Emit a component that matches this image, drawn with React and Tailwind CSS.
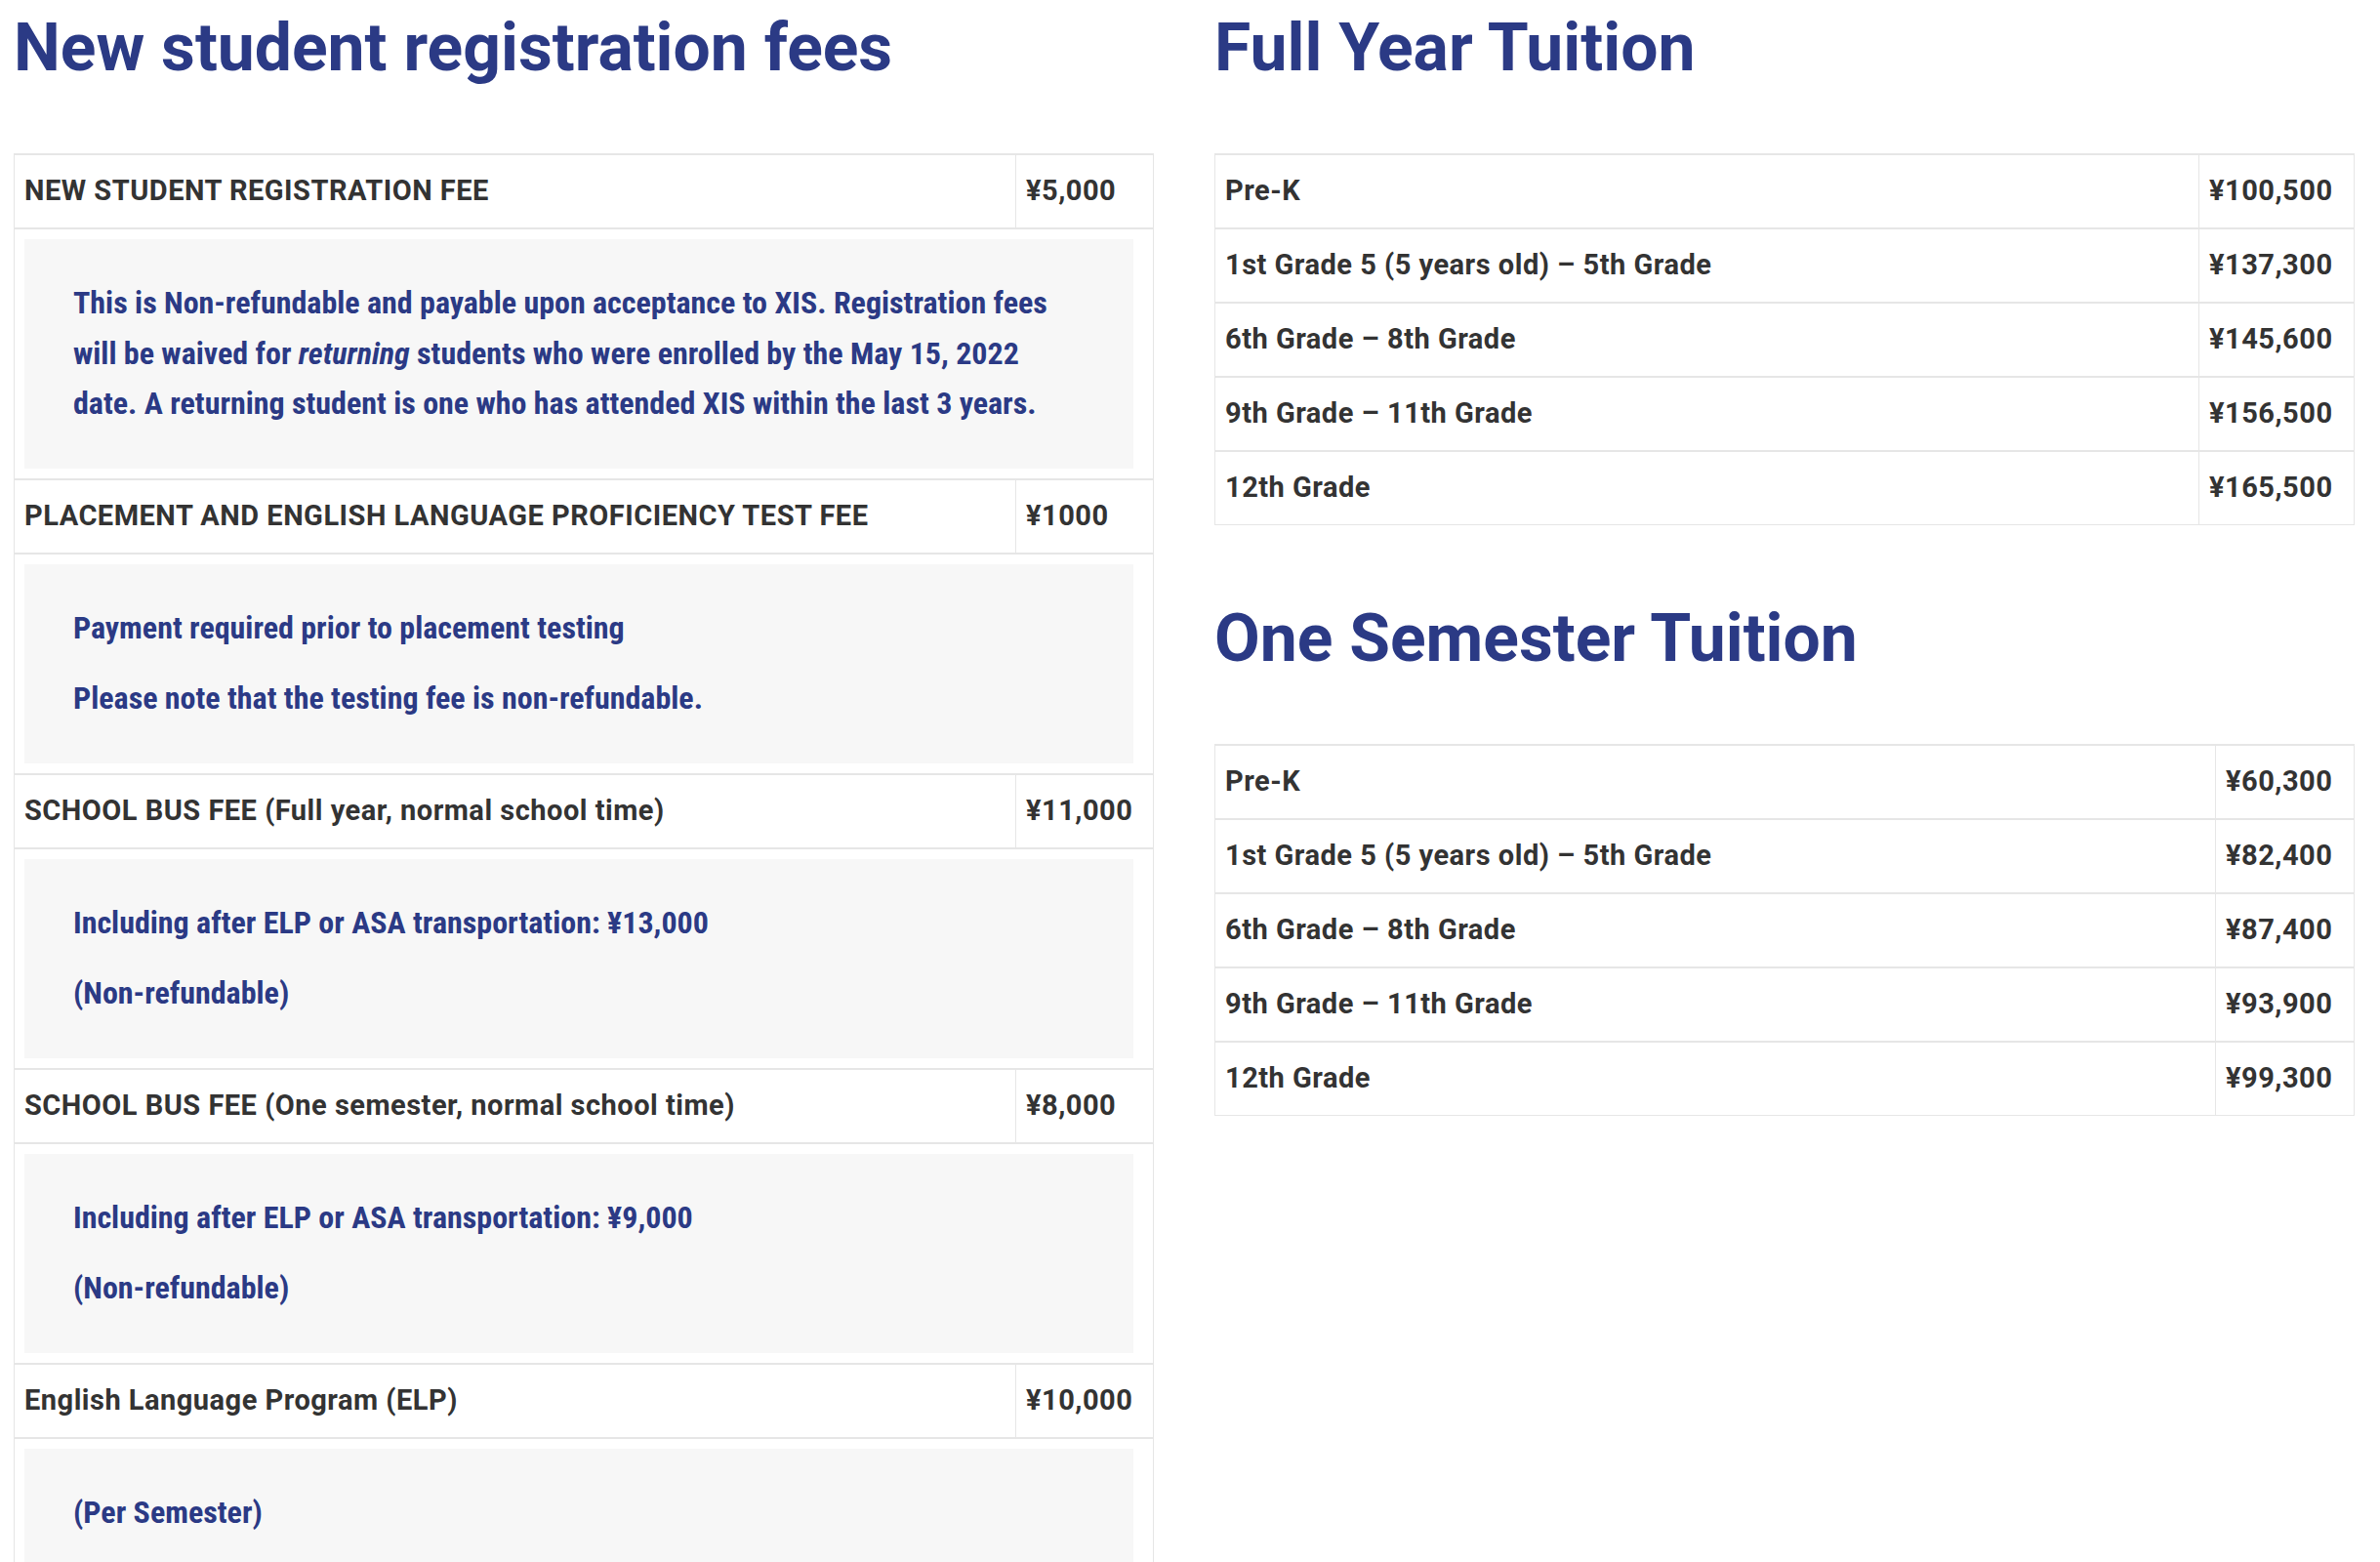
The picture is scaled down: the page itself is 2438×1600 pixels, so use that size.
import React from "react";

const fees = [
  {
    label: "NEW STUDENT REGISTRATION FEE",
    price: "¥5,000",
    notes: [
      <>
        This is Non-refundable and payable upon acceptance to XIS. Registration fees
        <br />
        will be waived for <em>returning</em> students who were enrolled by the May 15, 2022
        <br />
        date. A returning student is one who has attended XIS within the last 3 years.
      </>,
    ],
  },
  {
    label: "PLACEMENT AND ENGLISH LANGUAGE PROFICIENCY TEST FEE",
    price: "¥1000",
    notes: ["Payment required prior to placement testing", "Please note that the testing fee is non-refundable."],
  },
  {
    label: "SCHOOL BUS FEE (Full year, normal school time)",
    price: "¥11,000",
    notes: ["Including after ELP or ASA transportation: ¥13,000", "(Non-refundable)"],
  },
  {
    label: "SCHOOL BUS FEE (One semester, normal school time)",
    price: "¥8,000",
    notes: ["Including after ELP or ASA transportation: ¥9,000", "(Non-refundable)"],
  },
  {
    label: "English Language Program (ELP)",
    price: "¥10,000",
    notes: ["(Per Semester)"],
  },
];

const fullYear = [
  ["Pre-K", "¥100,500"],
  ["1st Grade 5 (5 years old) – 5th Grade", "¥137,300"],
  ["6th Grade – 8th Grade", "¥145,600"],
  ["9th Grade – 11th Grade", "¥156,500"],
  ["12th Grade", "¥165,500"],
];

const semester = [
  ["Pre-K", "¥60,300"],
  ["1st Grade 5 (5 years old) – 5th Grade", "¥82,400"],
  ["6th Grade – 8th Grade", "¥87,400"],
  ["9th Grade – 11th Grade", "¥93,900"],
  ["12th Grade", "¥99,300"],
];

function Heading({ children, className = "" }) {
  return (
    <h2 className={`text-[67.8px] leading-[84px] font-bold tracking-normal text-[#2b3a85] ${className}`}>
      {children}
    </h2>
  );
}

function PriceRow({ label, price, priceCol }) {
  return (
    <div className={`grid ${priceCol} h-[76px] border-t-2 border-[#e6e6e6]`}>
      <div className="flex items-center px-[10px] border-r border-[#e6e6e6] whitespace-nowrap">{label}</div>
      <div className="flex items-center px-[10px] whitespace-nowrap">{price}</div>
    </div>
  );
}

function NoteRow({ notes }) {
  return (
    <div className="border-t-2 border-[#e6e6e6] pt-[10px] pb-[10px] pl-[10px] pr-[20px]">
      <div className="bg-[#f7f7f7] py-[40px] pl-[50px] pr-[20px] flex flex-col gap-[21px] font-['Roboto_Condensed','Liberation_Sans_Narrow',Roboto,sans-serif] font-bold text-[32px] leading-[51.5px] tracking-normal text-[#2b3a85] whitespace-nowrap">
        {notes.map((n, i) => (
          <p key={i}>{n}</p>
        ))}
      </div>
    </div>
  );
}

function TuitionTable({ rows, priceCol }) {
  return (
    <div className="mt-[66px] border-x border-b border-[#e6e6e6]">
      {rows.map(([label, price]) => (
        <PriceRow key={label} label={label} price={price} priceCol={priceCol} />
      ))}
    </div>
  );
}

export default function App() {
  return (
    <div className="min-h-screen bg-white font-['Roboto',sans-serif] text-[29px] tracking-[0.5px] font-bold text-[#333333]">
      <div className="grid grid-cols-[1168px_1168px] gap-[62px] pl-[14px]">
        <div>
          <Heading className="pt-[7px]">New student registration fees</Heading>
          <div className="mt-[66px] border-x border-[#e6e6e6]">
            {fees.map((f) => (
              <div key={f.label}>
                <PriceRow label={f.label} price={f.price} priceCol="grid-cols-[1fr_140px]" />
                <NoteRow notes={f.notes} />
              </div>
            ))}
          </div>
        </div>
        <div>
          <Heading className="pt-[7px]">Full Year Tuition</Heading>
          <TuitionTable rows={fullYear} priceCol="grid-cols-[1fr_158px]" />
          <Heading className="mt-[74px]">One Semester Tuition</Heading>
          <TuitionTable rows={semester} priceCol="grid-cols-[1fr_141px]" />
        </div>
      </div>
    </div>
  );
}
